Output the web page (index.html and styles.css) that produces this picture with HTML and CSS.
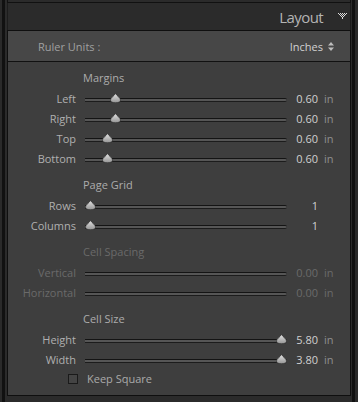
FILE: index.html
```html
<!DOCTYPE html>
<html lang="en">
  <head>
    <meta charset="UTF-8" />
    <meta name="viewport" content="width=device-width, initial-scale=1.0" />
    <title>Layout</title>
    <link rel="stylesheet" href="styles.css">
  </head>
  <body>
    <svg width="0" height="0" style="position: absolute">
      <defs>
        <linearGradient id="thumbFill" x1="0" y1="0" x2="0" y2="1">
          <stop offset="0" stop-color="#e4e4e4" />
          <stop offset="1" stop-color="#959595" />
        </linearGradient>
        <symbol id="thumb" viewBox="0 0 11 10">
          <path d="M5.5 0.3 C6.6 3 10.5 4.6 10.5 7.1 A5 2.6 0 0 1 0.5 7.1 C0.5 4.6 4.4 3 5.5 0.3 Z" fill="url(#thumbFill)" stroke="#262626" stroke-width="0.6" />
        </symbol>
      </defs>
    </svg>

    <div class="frame">
      <div class="prev"></div>

      <div class="header">
        <span class="title">Layout</span>
        <svg class="collapse" width="9" height="7" viewBox="0 0 9 7">
          <g fill="#dcdcdc">
            <rect x="0" y="0" width="1" height="1" /><rect x="2" y="0" width="1" height="1" /><rect x="4" y="0" width="1" height="1" /><rect x="6" y="0" width="1" height="1" /><rect x="8" y="0" width="1" height="1" />
            <rect x="1" y="1" width="1" height="1" /><rect x="3" y="1" width="1" height="1" /><rect x="5" y="1" width="1" height="1" /><rect x="7" y="1" width="1" height="1" />
            <rect x="2" y="2" width="1" height="1" /><rect x="4" y="2" width="1" height="1" /><rect x="6" y="2" width="1" height="1" />
            <rect x="3" y="3" width="1" height="1" /><rect x="5" y="3" width="1" height="1" />
            <rect x="4" y="4" width="1" height="1" />
            <rect x="4" y="5" width="1" height="1" />
          </g>
        </svg>
      </div>

      <div class="panel">
        <div class="ruler">
          <span class="ruler-label">Ruler Units :</span>
          <span class="ruler-value">
            Inches
            <svg class="updown" width="6" height="9" viewBox="0 0 6 9">
              <path d="M3 0 L6 3.5 H0 Z M3 9 L6 5.5 H0 Z" fill="#bdbdbd" />
            </svg>
          </span>
        </div>

        <div class="body">
          <div class="group">
            <div class="heading">Margins</div>
            <div class="row">
              <span class="label">Left</span>
              <div class="track"><svg class="thumb" style="left: 25px"><use href="#thumb" /></svg></div>
              <span class="value">0.60</span><span class="unit">in</span>
            </div>
            <div class="row">
              <span class="label">Right</span>
              <div class="track"><svg class="thumb" style="left: 25px"><use href="#thumb" /></svg></div>
              <span class="value">0.60</span><span class="unit">in</span>
            </div>
            <div class="row">
              <span class="label">Top</span>
              <div class="track"><svg class="thumb" style="left: 17px"><use href="#thumb" /></svg></div>
              <span class="value">0.60</span><span class="unit">in</span>
            </div>
            <div class="row">
              <span class="label">Bottom</span>
              <div class="track"><svg class="thumb" style="left: 17px"><use href="#thumb" /></svg></div>
              <span class="value">0.60</span><span class="unit">in</span>
            </div>
          </div>

          <div class="group">
            <div class="heading">Page Grid</div>
            <div class="row">
              <span class="label">Rows</span>
              <div class="track"><svg class="thumb" style="left: 0px"><use href="#thumb" /></svg></div>
              <span class="value">1</span><span class="unit"></span>
            </div>
            <div class="row">
              <span class="label">Columns</span>
              <div class="track"><svg class="thumb" style="left: 0px"><use href="#thumb" /></svg></div>
              <span class="value">1</span><span class="unit"></span>
            </div>
          </div>

          <div class="group disabled">
            <div class="heading">Cell Spacing</div>
            <div class="row">
              <span class="label">Vertical</span>
              <div class="track"></div>
              <span class="value">0.00</span><span class="unit">in</span>
            </div>
            <div class="row">
              <span class="label">Horizontal</span>
              <div class="track"></div>
              <span class="value">0.00</span><span class="unit">in</span>
            </div>
          </div>

          <div class="group">
            <div class="heading">Cell Size</div>
            <div class="row">
              <span class="label">Height</span>
              <div class="track"><svg class="thumb" style="left: 191px"><use href="#thumb" /></svg></div>
              <span class="value">5.80</span><span class="unit">in</span>
            </div>
            <div class="row">
              <span class="label">Width</span>
              <div class="track"><svg class="thumb" style="left: 191px"><use href="#thumb" /></svg></div>
              <span class="value">3.80</span><span class="unit">in</span>
            </div>
            <label class="keep">
              <span class="box"></span>
              <span>Keep Square</span>
            </label>
          </div>
        </div>
      </div>
    </div>
  </body>
</html>
```

FILE: styles.css
```css
* {
  box-sizing: border-box;
}

body {
  margin: 0;
  width: 358px;
  height: 402px;
  overflow: hidden;
  background-color: #2a2a2a;
  font-family: "Open Sans", sans-serif;
  font-size: 11px;
  color: #b0b0b0;
}

.frame {
  margin-left: 2px;
  width: 353px;
  height: 402px;
  padding: 0 1px 0 2px;
  border-left: 3px solid #111;
  border-right: 3px solid #111;
  background-color: #2b2b2b;
}

.prev {
  height: 3px;
  border: 1px solid #111;
  border-top: none;
}

.header {
  height: 27px;
  display: flex;
  align-items: center;
  justify-content: flex-end;
  padding: 1px 3px 0 0;
  border-left: 1px solid #1c1c1c;
  border-right: 1px solid #1c1c1c;
}

.title {
  font-size: 15px;
  color: #b4b4b4;
  letter-spacing: -0.6px;
}

.collapse {
  margin-left: 15px;
  margin-top: -2px;
}

.panel {
  height: 366px;
  border: 1px solid #0f0f0f;
}

.ruler {
  height: 31px;
  display: flex;
  align-items: center;
  justify-content: space-between;
  padding: 0 16px 0 30px;
  background-color: #474747;
  border-bottom: 1px solid #111;
}

.ruler-label {
  color: #a0a0a0;
}

.ruler-value {
  display: flex;
  align-items: center;
  gap: 5px;
  color: #d2d2d2;
}

.body {
  height: 333px;
  padding-top: 6px;
  background-color: #3e3e3e;
}

.group + .group {
  margin-top: 7px;
}

.heading {
  height: 20px;
  line-height: 20px;
  padding-left: 75px;
  color: #acacac;
}

.row {
  display: grid;
  grid-template-columns: 77px 202px 31px auto;
  align-items: center;
  height: 20px;
}

.label {
  text-align: right;
  padding-right: 9px;
}

.track {
  position: relative;
  height: 4px;
  margin-top: 4px;
  border-radius: 0 2px 2px 0;
  border-top: 1px solid #141414;
  border-bottom: 1px solid #1c1c1c;
  background-color: #565656;
}

.thumb {
  position: absolute;
  top: -6px;
  width: 11px;
  height: 10px;
}

.value {
  text-align: right;
  color: #d0d0d0;
}

.unit {
  padding-left: 6px;
  color: #8e8e8e;
}

.disabled .heading,
.disabled .label,
.disabled .value,
.disabled .unit {
  color: #6a6a6a;
}

.keep {
  display: flex;
  align-items: center;
  height: 19px;
  padding-left: 60px;
  color: #aaaaaa;
}

.box {
  width: 10px;
  height: 10px;
  margin-right: 9px;
  border: 1px solid #1a1a1a;
  background-color: #444;
}
```
